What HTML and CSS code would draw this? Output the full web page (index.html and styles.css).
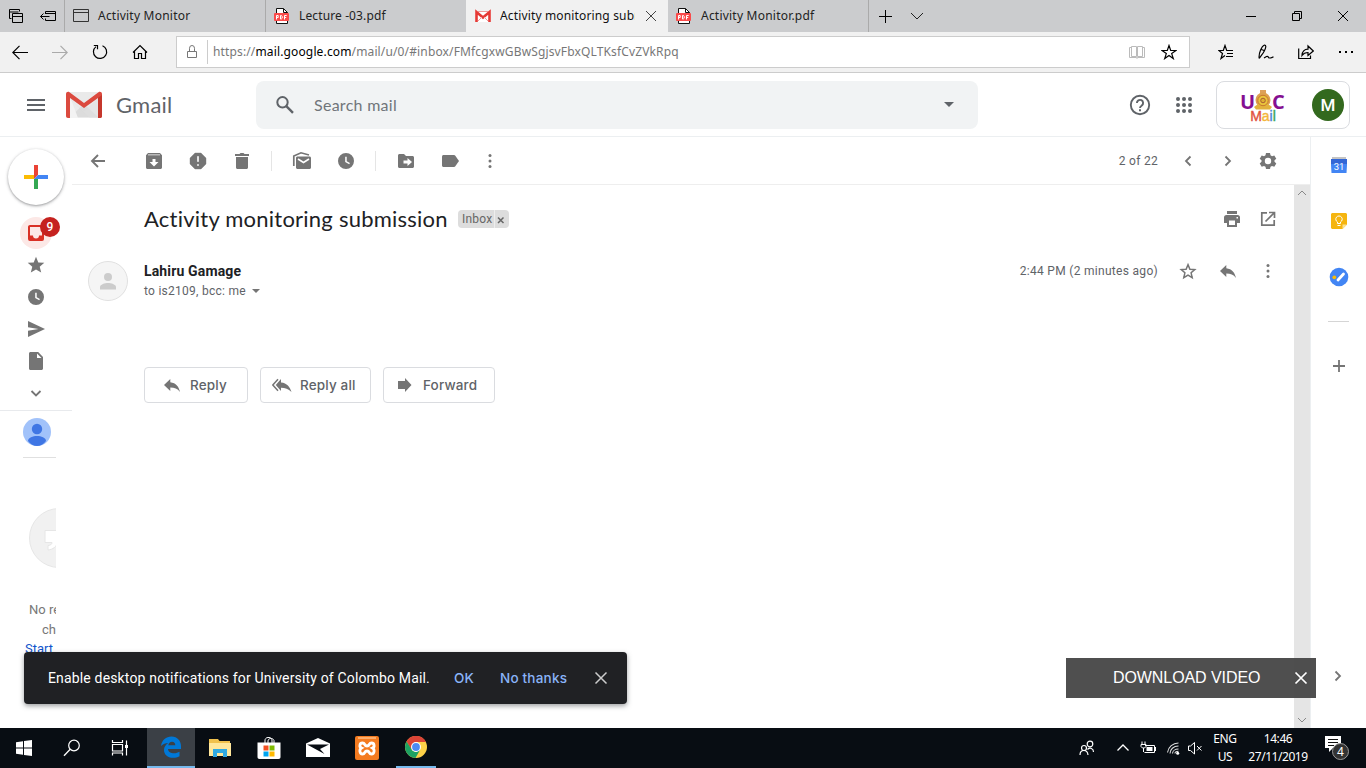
FILE: index.html
```
<!DOCTYPE html>
<html lang="en">
<head>
<meta charset="utf-8">
<title>Activity monitoring submission</title>
<link rel="stylesheet" href="styles.css">
</head>
<body>
<svg class="sprite" aria-hidden="true">
  <defs>
    <symbol id="pdf" viewBox="0 0 16 16"><path d="M2.500 15.500V.5h7l4 4v11z" fill="#fff" stroke="#111"/><path d="M9.500.5v4h4" fill="none" stroke="#111"/><rect x="0" y="5" width="15" height="8" rx="1" fill="#fa4b4b"/><path d="M2.500 11.500v-4h1.700v2H2.500M6.500 7.500v3.500h.8l.9-.8V8.300l-.9-.8zM10.500 11.500v-4h2.200M10.500 9.500h1.700" fill="none" stroke="#fff"/></symbol>
    <symbol id="close" viewBox="0 0 16 16"><path d="M3 3l10 10M13 3L3 13" fill="none" stroke="currentColor"/></symbol>
    <symbol id="clock" viewBox="0 0 20 20"><path fill-rule="evenodd" d="M10 2a8 8 0 1 0 0 16 8 8 0 0 0 0-16zM9.200 5.800h1.500v4.400l3.200 1.900-.7 1.200-4-2.400z"/></symbol>
    <symbol id="dots" viewBox="0 0 20 20"><circle cx="10" cy="4.500" r="1.500"/><circle cx="10" cy="10" r="1.500"/><circle cx="10" cy="15.500" r="1.500"/></symbol>
    <symbol id="reply" viewBox="0 0 20 20"><path d="M8.300 7.300V4L2 10.100l6.300 6v-3.500c4.300 0 7.200 1.200 9.700 4.400-1-5-4-9-9.700-9.700z"/></symbol>
    <symbol id="chev" viewBox="0 0 20 20"><path d="M7.500 5.500L12 10l-4.500 4.500" fill="none" stroke="currentColor" stroke-width="1.800"/></symbol>
  </defs>
</svg>

<div class="tabs">
  <div class="tabtools">
    <svg width="16" height="16" viewBox="0 0 16 16"><g fill="none" stroke="#000"><path d="M3.500 10.500h-2v-9h10v2M1.500 4h9"/><path d="M4.500 5.500h10v9h-10zM4.500 8.500h10"/></g></svg>
    <svg width="18" height="16" viewBox="0 0 18 16"><path d="M6.500 6V3.500h10v9h-10V10.500M6.500 5.500h10M1.500 8.500h9M4.500 5.500l-3 3 3 3" fill="none" stroke="#000"/></svg>
  </div>
  <div class="tab"><svg width="16" height="16" viewBox="0 0 16 16"><path d="M.5 1.500h15v12H.5zM.5 4.500h15" fill="none" stroke="#333"/></svg><span>Activity Monitor</span></div>
  <div class="tab second"><svg width="16" height="16"><use href="#pdf"/></svg><span>Lecture -03.pdf</span></div>
  <div class="tab active"><svg width="16" height="16" viewBox="0 0 16 16"><path d="M0 3h16v11H0z" fill="#fff"/><path d="M1.500 14V4L8 9.500 14.500 4v10" fill="none" stroke="#e53935" stroke-width="2.600"/><path d="M3 13l4-4M13 13L9 9M3 3.500h10" stroke="#ef9a9a" stroke-width="1" fill="none"/></svg><span>Activity monitoring submission</span><svg class="x" width="16" height="16"><use href="#close"/></svg></div>
  <div class="tab last"><svg width="16" height="16"><use href="#pdf"/></svg><span>Activity Monitor.pdf</span></div>
  <div class="newtab">
    <svg width="14" height="14" viewBox="0 0 14 14"><path d="M7.500 1v13M1 7.500h13" stroke="#000" fill="none"/></svg>
    <svg width="14" height="14" viewBox="0 0 14 14"><path d="M1 4l6 6 6-6" stroke="#222" fill="none"/></svg>
  </div>
  <div class="win">
    <svg width="12" height="12" viewBox="0 0 12 12"><path d="M1 6.500h10" stroke="#000"/></svg>
    <svg width="12" height="12" viewBox="0 0 12 12"><path d="M1.500 3.500h7v7h-7zM3.500 3.500v-2h7v7h-2" stroke="#000" fill="none"/></svg>
    <svg width="12" height="12" viewBox="0 0 12 12"><path d="M1 1l10 10M11 1L1 11" stroke="#000" fill="none"/></svg>
  </div>
</div>

<div class="nav">
  <div class="navbtns">
    <svg width="16" height="16" viewBox="0 0 16 16"><path d="M.8 8.500H16M7.500 1.800L.8 8.500l6.700 6.700" fill="none" stroke="#000" stroke-width="1.200"/></svg>
    <svg width="16" height="16" viewBox="0 0 16 16"><path d="M0 8.500h15.200M8.500 1.800l6.700 6.700-6.700 6.700" fill="none" stroke="#aaa" stroke-width="1.200"/></svg>
    <svg width="16" height="16" viewBox="0 0 16 16"><path d="M10.500 1.700A6.600 6.600 0 1 1 4 2.600M1.800 1.500h3.700v3.800" fill="none" stroke="#000" stroke-width="1.200"/></svg>
    <svg width="16" height="16" viewBox="0 0 16 16"><path d="M1 8.500l7-7 7 7M2.500 7.500v7h4v-5h3v5h4v-7" fill="none" stroke="#000" stroke-width="1.200"/></svg>
  </div>
  <div class="url">
    <svg width="12" height="16" viewBox="0 0 12 16"><path d="M1.500 7.500h9v6h-9zM3.500 7.500V4.300a2.500 2.800 0 0 1 5 0v3.200" fill="none" stroke="#777"/></svg>
    <span class="addr">https://<b>mail.google.com</b>/mail/u/0/#inbox/FMfcgxwGBwSgjsvFbxQLTKsfCvZVkRpq</span>
    <svg class="book" width="16" height="16" viewBox="0 0 16 16"><path d="M2.500 2.500h5v10h-5zM8.500 2.500h5v10h-5zM2.500 3.500h-2v10h7l.5 1 .5-1h7v-10h-2" fill="none" stroke="#bbb"/></svg>
    <svg width="16" height="16" viewBox="0 0 16 16"><path d="M8 1.500l1.700 5H15l-4.300 3.100 1.600 5L8 11.500l-4.300 3.100 1.600-5L1 6.500h5.300z" fill="none" stroke="#000" stroke-width="1.200"/></svg>
  </div>
  <div class="navtools">
    <svg width="16" height="16" viewBox="0 0 16 16"><path d="M7 11.500l-4 3 1.500-5L.8 6.500h4.500L7 1.500l1.700 5H15M9 9.500h6M8 12.500h7" fill="none" stroke="#000" stroke-width="1.200"/></svg>
    <svg width="16" height="16" viewBox="0 0 16 16"><path d="M1.200 14.500c-.8-5 2.500-12.500 5.300-13.500 2 .2 1.500 2.500-.2 6S3 11.500 1.200 14.500M3.500 5.500l2.500 1M6 14l2.500-1.500c1.200-.5 1.800.3 1.800.8s2.200 1.500 5.200-.5" fill="none" stroke="#000" stroke-width="1.200"/></svg>
    <svg width="16" height="16" viewBox="0 0 16 16"><path d="M.7 4.500v10h11.800v-3M4 11.500c0-4 2.500-6.300 6-6.300V2l5.300 5-5.300 4.500V8.500C7 8.500 5.500 9.300 4 11.500z" fill="none" stroke="#000" stroke-width="1.200"/></svg>
    <svg width="16" height="16" viewBox="0 0 16 16"><path d="M1 7h2v2H1zM7 7h2v2H7zM13 7h2v2h-2z"/></svg>
  </div>
</div>

<div class="head">
  <svg class="menu" width="20" height="16" viewBox="0 0 20 16"><path d="M1 3h18M1 8h18M1 13h18" stroke="#5f6368" stroke-width="2"/></svg>
  <svg class="logo" width="36" height="28" viewBox="0 0 36 28"><path d="M2 1h32v26H2z" fill="#eaeaea"/><path d="M4 26l14-13 14 13z" fill="#dcdcdc"/><path d="M4 6v21h8z" fill="#f3f3f3"/><path d="M4 8l14 12L34 6v21H24z" fill="#e0e0e0" opacity=".5"/><path d="M0 3v22c0 1.200.8 2 2 2h2V7l14 10L32 7v20h2c1.200 0 2-.8 2-2V3c0-2-2.200-2.800-3.500-1.700L18 12 3.500 1.300C2.200.2 0 1 0 3z" fill="#db4a3f"/><path d="M32 7l4-3v21c0 1.200-.8 2-2 2h-2z" fill="#c5372c"/></svg>
  <span class="gmail">Gmail</span>
  <div class="search">
    <svg width="20" height="20" viewBox="0 0 20 20"><circle cx="7.500" cy="7.300" r="5.200" fill="none" stroke="#5f6368" stroke-width="2"/><path d="M11.300 11.200l6.700 6.600" stroke="#5f6368" stroke-width="2.400"/></svg>
    <span class="ph">Search mail</span>
    <svg width="10" height="5" viewBox="0 0 10 5"><path d="M0 0h10L5 5z" fill="#5f6368"/></svg>
  </div>
  <svg class="help" width="22" height="22" viewBox="0 0 22 22"><circle cx="11" cy="11" r="9.200" fill="none" stroke="#5f6368" stroke-width="1.900"/><path d="M7.900 9a3.100 3.100 0 1 1 4.900 2.500c-1.100.8-1.800 1.200-1.800 2.500" fill="none" stroke="#5f6368" stroke-width="1.900"/><path d="M10 15.300h2v2h-2z" fill="#5f6368"/></svg>
  <svg class="apps" width="18" height="18" viewBox="0 0 18 18"><path d="M3 3h.01M9 3h.01M15 3h.01M3 9h.01M9 9h.01M15 9h.01M3 15h.01M9 15h.01M15 15h.01" stroke="#5f6368" stroke-width="4" stroke-linecap="round"/></svg>
  <div class="account">
    <div class="uoc">
      <div class="uocrow"><b>U</b><svg width="18" height="22" viewBox="0 0 18 22"><path d="M6 1h6v4H6z" fill="#dda05a"/><circle cx="9" cy="11" r="7.500" fill="#dda050"/><path d="M0 18l4-3h10l4 3-2 2.500H2z" fill="#e2b23d"/><circle cx="9" cy="11.500" r="5.200" fill="#eac43c" stroke="#c8792e"/><circle cx="9" cy="11.500" r="2.300" fill="#dfb132" stroke="#a95c35"/></svg><b>C</b></div>
      <div class="uocmail"><i class="r">M</i><i class="o">a</i><i class="bl">i</i><i class="g">l</i></div>
    </div>
    <span class="ava">M</span>
  </div>
</div>

<div class="body">
  <div class="rail">
    <div class="compose"><svg width="24" height="24" viewBox="0 0 24 24"><path d="M10 0h4v10l-4 4z" fill="#ea4335"/><path d="M0 10h10v4H0z" fill="#fbbc04"/><path d="M10 14h4v10h-4z" fill="#34a853"/><path d="M14 10h10v4H10z" fill="#4285f4"/></svg></div>
    <div class="item inbox"><svg width="20" height="20" viewBox="0 0 20 20"><path d="M4 2h12a2 2 0 0 1 2 2v12a2 2 0 0 1-2 2H4a2 2 0 0 1-2-2V4c0-1.100.9-2 2-2zm0 2v8.500h3a3 3 0 0 0 6 0h3V4z" fill="#d93025" fill-rule="evenodd"/></svg><span class="badge">9</span></div>
    <div class="item"><svg width="20" height="20" viewBox="0 0 20 20"><path d="M10 1.800l2.300 5.600 6 .4-4.600 3.900 1.500 5.900L10 14.400l-5.200 3.200 1.500-5.900-4.600-3.900 6-.4z"/></svg></div>
    <div class="item"><svg width="20" height="20"><use href="#clock"/></svg></div>
    <div class="item"><svg width="20" height="20" viewBox="0 0 20 20"><path d="M2 2l17 8-17 8v-6.200l10.500-1.800L2 8.200z"/></svg></div>
    <div class="item"><svg width="20" height="20" viewBox="0 0 20 20"><path fill-rule="evenodd" d="M4.500 1h7.700L17 6v11.500c0 .8-.7 1.500-1.500 1.500h-11c-.8 0-1.500-.7-1.500-1.500v-15C3 1.700 3.700 1 4.500 1zM11 2.500V7h4.500z"/></svg></div>
    <div class="item"><svg width="20" height="20" viewBox="0 0 20 20"><path d="M5.500 8l4.500 4.500L14.500 8" fill="none" stroke="currentColor" stroke-width="1.800"/></svg></div>
    <div class="chat">
      <svg width="28" height="28" viewBox="0 0 28 28"><circle cx="14" cy="14" r="14" fill="#a1c2fa"/><circle cx="14" cy="11" r="5.200" fill="#3f76e4"/><path d="M5 23c0-3.500 5-5 9-5s9 1.500 9 5c-2.500 3.300-5.500 5-9 5s-6.500-1.700-9-5z" fill="#3f76e4"/></svg>
      <div class="hang">
        <svg width="60" height="60" viewBox="0 0 60 60"><circle cx="30" cy="30" r="29.500" fill="#f1f1f1" stroke="#e6e6e6"/><path d="M16 22.500h12v12c0 4-4 7-9 7.500v-4.500c2 0 4-1 4-3h-7z" fill="#fff" stroke="#e6e6e6"/></svg>
        <div class="l1">No recent</div><div class="l2">chats</div><div class="l3">Start</div>
      </div>
    </div>
  </div>

  <div class="main">
    <div class="bar">
      <svg class="b1" width="20" height="20" viewBox="0 0 20 20"><path d="M17 10H4.500M10 4l-6 6 6 6" fill="none" stroke="#757575" stroke-width="1.900"/></svg>
      <svg class="b2" width="20" height="20" viewBox="0 0 20 20"><path fill-rule="evenodd" d="M4 2h12l2 2.300v12.200c0 .8-.7 1.500-1.500 1.500h-13c-.8 0-1.500-.7-1.500-1.500V4.300zM4 3.500h12v.8H4zM8.500 8v3H5.500l4.500 4.500 4.500-4.500h-3V8z"/></svg>
      <svg class="b3" width="20" height="20" viewBox="0 0 20 20"><path fill-rule="evenodd" d="M7 2h6l5 5v6l-5 5H7l-5-5V7zM9 5v6h2V5zM9 13v2h2v-2z" stroke="#757575" stroke-width=".4" stroke-linejoin="round"/></svg>
      <svg class="b4" width="20" height="20" viewBox="0 0 20 20"><path d="M4 6h12v10.500c0 .8-.7 1.500-1.500 1.500h-9c-.8 0-1.500-.7-1.500-1.500zM3 3h4.500l1-1h3l1 1H17v2H3z"/></svg>
      <i class="sep s1"></i>
      <svg class="b5" width="20" height="20" viewBox="0 0 20 20"><path d="M1.800 15V5L9 1.800 17 4" fill="none" stroke="#757575" stroke-width="1.700"/><path d="M5 5.500h12.500c.8 0 1.500.7 1.500 1.500v9.500c0 .8-.7 1.500-1.500 1.500H5.500c-.8 0-1.500-.7-1.500-1.500V6.500z"/><path d="M6 8l5.500 3.500L17 8" fill="none" stroke="#fff" stroke-width="1.600"/></svg>
      <svg class="b6" width="20" height="20"><use href="#clock"/></svg>
      <i class="sep s2"></i>
      <svg class="b7" width="20" height="20" viewBox="0 0 20 20"><path fill-rule="evenodd" d="M3.500 3H8l2 2h6.500c.8 0 1.500.7 1.500 1.500v9c0 .8-.7 1.500-1.500 1.500h-13c-.8 0-1.500-.7-1.500-1.500v-11C2 3.700 2.700 3 3.500 3zM7.500 9.500v3H11.500v2.500l4.500-4-4.500-4v2.500z"/></svg>
      <svg class="b8" width="20" height="20" viewBox="0 0 20 20"><path d="M3.500 4H14c.5 0 1 .3 1.300.7L19 10l-3.700 5.300c-.3.4-.8.7-1.300.7H3.500c-.8 0-1.500-.7-1.500-1.500v-9C2 4.700 2.700 4 3.500 4z"/></svg>
      <svg class="b9" width="20" height="20"><use href="#dots"/></svg>
      <span class="count">2 of 22</span>
      <svg class="c1 flip" width="20" height="20"><use href="#chev"/></svg>
      <svg class="c2" width="20" height="20"><use href="#chev"/></svg>
      <svg class="c3" width="20" height="20" viewBox="0 0 20 20"><path fill-rule="evenodd" d="M8 2h4l.5 2.300 1.500.9 2.300-.8 2 3.300-1.800 1.600v1.500l1.800 1.600-2 3.300-2.300-.8-1.500.9L12 18H8l-.5-2.200-1.500-.9-2.300.8-2-3.300 1.800-1.600V9.300L1.700 7.700l2-3.300 2.300.8 1.500-.9zM10 6.800a3.200 3.200 0 1 0 0 6.400 3.200 3.200 0 0 0 0-6.400z"/></svg>
    </div>
    <div class="view">
      <div class="mail">
        <div class="subj">
          <h2>Activity monitoring submission</h2>
          <span class="tag"><span>Inbox</span><svg width="15" height="18" viewBox="0 0 15 18"><path d="M.5 0v18" stroke="#eee"/><path d="M4 7.500l5.500 5.500M9.500 7.500L4 13" stroke="#666" stroke-width="1.500"/></svg></span>
          <svg class="print" width="20" height="20" viewBox="0 0 20 20"><path fill-rule="evenodd" d="M5 2h10v3H5zM4.500 6h11A2.500 2.500 0 0 1 18 8.500V14h-3v4H5v-4H2V8.500A2.500 2.500 0 0 1 4.500 6zM7 11.500V16h6v-4.500zM14.500 8v1.500H16V8z"/></svg>
          <svg width="20" height="20" viewBox="0 0 20 20"><path d="M9 3.800H3.800v12.400h12.400V11M11 3.500h5.500V9M16.500 3.500l-9 9" fill="none" stroke="#757575" stroke-width="1.700"/></svg>
        </div>
        <div class="sender">
          <svg width="40" height="40" viewBox="0 0 40 40"><circle cx="20" cy="20" r="19.500" fill="#f5f5f5" stroke="#e0e0e0"/><circle cx="20" cy="16" r="4" fill="#ccc"/><path d="M12 28.500V26c0-2.500 5-4 8-4s8 1.500 8 4v2.500z" fill="#ccc"/></svg>
          <div class="who"><b>Lahiru Gamage</b><div><span>to is2109, bcc: me</span><svg width="8" height="4" viewBox="0 0 8 4"><path d="M0 0h8L4 4z"/></svg></div></div>
          <span class="time">2:44 PM (2 minutes ago)</span>
          <svg width="20" height="20" viewBox="0 0 20 20"><path d="M10 3.600l1.900 4.600 4.900.4-3.700 3.200 1.100 4.900-4.200-2.600-4.200 2.600 1.100-4.900-3.700-3.200 4.900-.4z" fill="none" stroke="#757575" stroke-width="1.500"/></svg>
          <svg width="20" height="20"><use href="#reply"/></svg>
          <svg width="20" height="20"><use href="#dots"/></svg>
        </div>
        <div class="acts">
          <div class="act a1"><svg width="20" height="20"><use href="#reply"/></svg><span>Reply</span></div>
          <div class="act a2"><svg width="20" height="20" viewBox="0 0 20 20"><path d="M9 7.500V4L3.800 10 9 16v-3.300c4.300 0 7.200 1 10.500 4.300-1.500-5-4.500-9-10.500-9.500z"/><path d="M6 4.300L.8 10 6 15.700" fill="none" stroke="#757575" stroke-width="1.500"/></svg><span>Reply all</span></div>
          <div class="act a3"><svg width="20" height="20" viewBox="0 0 20 20"><path d="M3 6h7V3l6.500 7-6.500 7v-3H3z"/></svg><span>Forward</span></div>
        </div>
      </div>
      <div class="scroll"><svg width="10" height="6" viewBox="0 0 10 6"><path d="M1 5l4-4 4 4" fill="none" stroke="#888"/></svg><svg width="10" height="6" viewBox="0 0 10 6"><path d="M1 1l4 4 4-4" fill="none" stroke="#888"/></svg></div>
    </div>
  </div>

  <div class="side">
    <svg class="cal" width="20" height="20" viewBox="0 0 20 20"><path d="M3 2h14v3H3z" fill="#c4c4c4"/><path d="M2 4h16v6l-.5 8h-15L2 10z" fill="#4285f4"/><path d="M2 4h16v5H2z" fill="#3367d6"/><text x="10" y="14.800" text-anchor="middle" class="caltext">31</text></svg>
    <svg class="keep" width="20" height="20" viewBox="0 0 20 20"><path d="M3 2h14l1 1v10.500L13.500 18H3l-1-1V3z" fill="#f5b50f"/><path d="M13.500 18v-4.500H18z" fill="#fde293"/><path d="M8.500 12.500V11a3.200 3.200 0 1 1 3 0v1.500zM8.500 14.500h3" fill="none" stroke="#fff"/></svg>
    <svg class="task" width="20" height="20" viewBox="0 0 20 20"><circle cx="10" cy="10" r="9.300" fill="#4285f4"/><path d="M9 13l5.500-6" stroke="#fff" stroke-width="2.800" stroke-linecap="round"/><circle cx="5.300" cy="10.300" r="1.900" fill="#fbbc04"/></svg>
    <i></i>
    <svg class="plus" width="20" height="20" viewBox="0 0 20 20"><path d="M10 4v12M4 10h12" stroke="#757575" stroke-width="1.800"/></svg>
    <svg class="exp" width="20" height="20"><use href="#chev"/></svg>
  </div>
</div>

<div class="taskbar">
  <div class="tk"><svg width="16" height="16" viewBox="0 0 16 16"><path d="M0 2.200L7 1.200v6.300H0zM8 1.100L16 0v7.500H8zM0 8.500h7v6.300L0 13.800zM8 8.500h8V16l-8-1.100z" fill="#fff"/></svg></div>
  <div class="tk"><svg width="18" height="18" viewBox="0 0 18 18"><circle cx="11" cy="6.500" r="5.300" fill="none" stroke="#fff" stroke-width="1.200"/><path d="M7.200 10.300L1 16.800" stroke="#fff" stroke-width="1.300"/></svg></div>
  <div class="tk"><svg width="18" height="18" viewBox="0 0 18 18"><path d="M1.500 1v2.500h10V1M1.500 16.500v-2.500h10v2.500M1.500 5.500h10v6.500h-10zM15.500 1.500v15" fill="none" stroke="#fff" stroke-width="1.200"/><path d="M14 6h3v3h-3z" fill="#fff"/></svg></div>
  <div class="tk edge"><svg width="22" height="22" viewBox="0 0 22 22"><path d="M1 10C2 4 6 .5 11.500.5 17.500.5 21 5 21 10v3H8c.2 3 3 4.300 6 4.300 2.200 0 4-.6 5.500-1.500v4.500c-2 1-4 1.500-6.500 1.500C7.500 21.800 4 18.500 4 14c0-3 1.800-5.500 4.300-7C5.500 7 3 8 1 10zm7.300-.8h7c0-2-1.200-3.400-3.300-3.400S8.800 7.300 8.300 9.200z" fill="#0078d7" fill-rule="evenodd"/></svg></div>
  <div class="tk"><svg width="22" height="20" viewBox="0 0 22 20"><path d="M0 1h9l1.500 2H21v15H0z" fill="#f0c14d"/><path d="M0 5h22v13H0z" fill="#ffe79b"/><path d="M4 19v-8h14v8h-4v-4H8v4z" fill="#2fa9e2"/></svg></div>
  <div class="tk"><svg width="24" height="24" viewBox="0 0 24 24"><path d="M8 7V5a3 3 0 0 1 3-3.500h1a3 3 0 0 1 3 3.500v2M11 7V5c0-3 5-3.500 6-.5V7" fill="none" stroke="#fff"/><path d="M.5 6.500h23V21c0 1.200-.7 2-2 2h-19c-1.300 0-2-.8-2-2z" fill="#fff"/><path d="M6.500 9.500h5v5h-5z" fill="#f25022"/><path d="M12.500 9.500h5v5h-5z" fill="#7fba00"/><path d="M6.500 15.500h5v5h-5z" fill="#00a4ef"/><path d="M12.500 15.500h5v5h-5z" fill="#ffb900"/></svg></div>
  <div class="tk"><svg width="24" height="20" viewBox="0 0 24 20"><path d="M0 5.500L12 0l12 5.500V19H0z" fill="#fff"/><path d="M1 6.500h22L14 11l4.500 5z" fill="#080d13"/></svg></div>
  <div class="tk"><svg width="24" height="24" viewBox="0 0 24 24"><rect width="24" height="24" rx="2" fill="#f47b20"/><path d="M3 2h18" stroke="#ffbe85" stroke-width="1.500"/><path d="M7.500 7c3 0 1.500 3 4.500 3s1.500-3 4.500-3 3.500 4 1 5c2.500 1.500 2 6-1 6s-1.500-3-4.500-3-1.500 3-4.500 3-3.500-4.500-1-6c-2.500-1-2-5 1-5z" fill="none" stroke="#fff" stroke-width="2.800"/></svg></div>
  <div class="tk chrome"><svg width="22" height="22" viewBox="0 0 22 22"><circle cx="11" cy="11" r="11" fill="#fdd148"/><path d="M11 6h10a11 11 0 0 0-19.500-.5L6.500 14z" fill="#db4437"/><path d="M1.500 5.500L6.700 13.500c1 1.500 3 2.500 4.300 2.500l4-2-4.500 8A11 11 0 0 1 1.500 5.500z" fill="#1da262"/><circle cx="11" cy="11" r="5" fill="#fff"/><circle cx="11" cy="11" r="3.900" fill="#4c8bf5"/></svg></div>
  <div class="tray">
    <svg width="16" height="16" viewBox="0 0 16 16"><g fill="none" stroke="#fff" stroke-width="1.200"><circle cx="11" cy="4" r="2.800"/><circle cx="5" cy="8" r="2.500"/><path d="M1 15c0-6 7.500-6 8 0M8.500 9.500c2.500-2.500 6-1 6 2.500"/></g></svg>
    <svg class="up" width="14" height="10" viewBox="0 0 14 10"><path d="M1.500 7.500L7 2l5.500 5.500" fill="none" stroke="#fff" stroke-width="1.300"/></svg>
    <svg class="bat" width="18" height="16" viewBox="0 0 18 16"><path d="M6 5.500h9.500v7h-10M4.500 12v-4M3 1.500v3M6 1.500v3M2 4.500h5v2L5.500 8h-2L2 6.500zM16.500 7v4" fill="none" stroke="#fff"/><path d="M7.500 7h6v4h-6z" fill="#fff"/></svg>
    <svg class="wifi" width="14" height="16" viewBox="0 0 14 16"><path d="M1.500 12.500A11 11 0 0 1 12.500 3M4 13.500C4 9.500 7.500 6 12.500 6M6.500 13.500C6.500 11 9 9 12.500 9M9 13.500c0-1.200 1.500-2.200 3.500-2.200" fill="none" stroke="#ddd" stroke-width="1.100"/><circle cx="11.700" cy="13.200" r="1.500" fill="#fff"/></svg>
    <svg class="vol" width="16" height="16" viewBox="0 0 16 16"><path d="M1.500 6v4.500h2l4 3.500V2.500l-4 3.500zM10 6l4.500 4.500M14.500 6L10 10.500" fill="none" stroke="#fff"/></svg>
    <span class="lang">ENG<br>US</span>
    <span class="date">14:46<br>27/11/2019</span>
    <svg class="note" width="26" height="26" viewBox="0 0 26 26"><path d="M1 1h16v12H9l-4 4v-4H1z" fill="#fff"/><path d="M4 4.500h10M4 7.500h10M4 10.500h6" stroke="#111"/><circle cx="16.500" cy="16.500" r="8" fill="#333" stroke="#999"/><text x="16.500" y="20.500" text-anchor="middle" class="four">4</text></svg>
  </div>
</div>

<div class="toast"><span class="msg">Enable desktop notifications for University of Colombo Mail.</span><b class="ok">OK</b><b class="no">No thanks</b><svg width="16" height="16" viewBox="0 0 16 16"><path d="M2.500 2.500l11 11M13.500 2.500l-11 11" stroke="#ccc" stroke-width="1.500"/></svg></div>
<div class="dl"><span>DOWNLOAD VIDEO</span><svg width="16" height="16" viewBox="0 0 16 16"><path d="M2.500 2.500l11 11M13.500 2.500l-11 11" stroke="#fff" stroke-width="1.700"/></svg></div>
</body>
</html>
```
FILE: styles.css
```
* { box-sizing: border-box; }
body { margin: 0; width: 1366px; height: 768px; overflow: hidden; background: #fff; font-family: Roboto, "Liberation Sans", sans-serif; color: #202124; white-space: nowrap; display: flex; flex-direction: column; position: relative; }
svg { display: block; flex: none; fill: #757575; color: #757575; }
.sprite { position: absolute; width: 0; height: 0; }

/* browser chrome */
.tabs { height: 32px; display: flex; background: #cbccce; font: 12px/32px "Noto Sans", "Open Sans", sans-serif; letter-spacing: .22px; color: #222; }
.tabtools { width: 65px; display: flex; align-items: center; padding-left: 8px; gap: 15px; border-right: 1px solid #aaa; }
.tab { width: 201px; display: flex; align-items: center; padding-left: 8px; gap: 9px; border-right: 1px solid #aaa; }
.tab.second { width: 200px; border-right: 0; letter-spacing: .12px; }
.tab.active { width: 202px; background: #f1f1f1; color: #111; padding-left: 9px; border: 0; letter-spacing: .15px; }
.active span { width: 135px; overflow: hidden; }
.active .x { color: #444; margin-left: -1px; }
.newtab { display: flex; align-items: center; gap: 18px; padding-left: 9px; }
.win { margin-left: auto; display: flex; align-items: center; gap: 34px; padding-right: 17px; }
.nav { height: 41px; display: flex; align-items: center; background: #f1f1f1; border-bottom: 1px solid #ccc; }
.navbtns { width: 176px; display: flex; gap: 24px; padding-left: 12px; }
.url { width: 1014px; height: 32px; display: flex; align-items: center; background: #fff; border: 1px solid #ccc; padding: 0 12px 0 9px; }
.addr { flex: 1; border-left: 1px solid #ccc; margin-left: 9px; padding-left: 5px; font: 12px/24px "Noto Sans", "Open Sans", sans-serif; letter-spacing: .14px; color: #777; }
.addr b { font-weight: 400; color: #000; }
.book { margin-right: 16px; }
.navtools { display: flex; gap: 24px; padding-left: 28px; }
.navtools svg { fill: #000; }

/* mail header */
.head { height: 64px; display: flex; align-items: center; border-bottom: 1px solid #eceff1; }
.menu { margin-left: 26px; }
.logo { margin-left: 20px; }
.gmail { width: 140px; margin-left: 14px; font: 22px/64px Lato, sans-serif; letter-spacing: .2px; color: #5f6368; }
.search { width: 722px; height: 48px; border-radius: 8px; background: #f1f3f4; display: flex; align-items: center; padding: 0 24px 0 19px; }
.ph { flex: 1; margin-left: 19px; font: 16px/48px Lato, sans-serif; letter-spacing: .28px; color: #70757a; }
.help { margin-left: 151px; }
.apps { margin-left: 24px; }
.account { margin-left: 23px; width: 134px; height: 48px; border: 1px solid #dadce0; border-radius: 8px; display: flex; align-items: center; padding: 0 5px 0 23px; justify-content: space-between; }
.uoc { width: 48px; height: 34px; }
.uocrow { display: flex; height: 23px; align-items: center; font: 20px/14px "Open Sans", sans-serif; color: #850f91; }
.uocrow svg { margin: 2px -1px 0 -1px; }
.uocrow b { width: 15px; height: 14px; margin-top: 6px; }
.uocrow b:last-child { margin-left: 1px; }
.uocmail { display: flex; justify-content: center; font: 400 14px/11px "Liberation Sans", sans-serif; padding-right: 2px; -webkit-text-stroke: .4px; }
.uocmail i { font-style: normal; }
.r { color: #e1523d; } .o { color: #f4b73b; } .bl { color: #4a86d8; } .g { color: #3ba55c; }
.ava { width: 32px; height: 32px; border-radius: 50%; background: #33691e; color: #fff; text-align: center; font: 500 17px/33px Roboto, sans-serif; }

/* left rail */
.body { height: 591px; display: flex; }
.rail { width: 72px; padding-top: 12px; display: flex; flex-direction: column; align-items: center; }
.compose { width: 56px; height: 56px; border-radius: 50%; background: #fff; box-shadow: 0 1px 2px rgba(60,64,67,.35), 0 1px 3px 1px rgba(60,64,67,.16); display: flex; align-items: center; justify-content: center; margin-bottom: 12px; }
.item { position: relative; width: 32px; height: 32px; display: flex; align-items: center; justify-content: center; }
.inbox { background: #fce8e6; border-radius: 50%; }
.badge { position: absolute; left: 20px; top: 0; width: 20px; height: 20px; border-radius: 50%; background: #c5221f; color: #fff; font: 500 12px/20px Roboto, sans-serif; text-align: center; }
.chat { width: 72px; margin-top: 1px; border-top: 1px solid #e8eaed; padding: 7px 16px 0 23px; }
.hang { width: 33px; height: 196px; margin-top: 11px; border-top: 1px solid #e0e0e0; overflow: hidden; padding-top: 50px; font-size: 13px; line-height: 20px; color: #777; }
.hang svg { margin-left: 6px; }
.l1 { margin: 32px 0 0 6px; } .l2 { margin-left: 19px; } .l3 { margin-left: 2px; color: #15c; line-height: 18px; width: 28px; }

/* message pane */
.main { width: 1238px; }
.bar { height: 48px; display: flex; align-items: center; border-bottom: 1px solid #eee; padding-left: 16px; }
.b2 { margin-left: 36px; } .b3, .b4, .b6, .b8 { margin-left: 24px; }
.sep { width: 1px; height: 20px; background: #e5e5e5; }
.s1 { margin-left: 19px; } .b5 { margin-left: 20px; } .s2 { margin-left: 19px; } .b7 { margin-left: 20px; } .b9 { margin-left: 20px; }
.count, .time { font-size: 12px; letter-spacing: .3px; color: #5f6368; }
.count { margin-left: auto; } .c1 { margin-left: 20px; } .c2 { margin-left: 20px; } .c3 { margin: 0 32px 0 20px; }
.flip { transform: scaleX(-1); }
.view { height: 543px; display: flex; }
.mail { width: 1222px; }
.subj { height: 68px; display: flex; align-items: center; padding: 0 16px 0 72px; }
h2 { margin: 0; width: 314px; font: 400 22px/28px Lato, sans-serif; letter-spacing: .23px; }
.tag { height: 18px; border-radius: 4px; background: #ddd; color: #666; display: flex; font-size: 12px; line-height: 18px; letter-spacing: .2px; padding-left: 4px; width: 51px; justify-content: space-between; }
.print { margin: 0 16px 0 auto; }
.sender { display: flex; padding: 8px 16px 0; align-items: flex-start; gap: 20px; }
.sender > svg:first-child { margin-right: -4px; }
.who { flex: 1; font-size: 14px; line-height: 20px; letter-spacing: .15px; }
.who div { display: flex; align-items: center; gap: 6px; font-size: 12px; letter-spacing: .26px; color: #5f6368; }
.time { line-height: 20px; }
.acts { display: flex; gap: 12px; padding: 66px 0 0 72px; }
.act { height: 36px; border: 1px solid #dadce0; border-radius: 4px; display: flex; align-items: center; font: 500 13.500px/34px Inter, sans-serif; letter-spacing: .15px; color: #5f6368; }
.a1 { width: 104px; padding-left: 17px; gap: 8px; } .a2 { width: 111px; padding-left: 11px; gap: 8px; } .a3 { width: 112px; padding-left: 11px; gap: 8px; }
.scroll { width: 16px; background: #e5e5e5; display: flex; flex-direction: column; align-items: center; justify-content: space-between; padding: 5px 0; }
.side { width: 56px; border-left: 1px solid #eceff1; display: flex; flex-direction: column; align-items: center; padding: 18px 0 42px; }
.keep, .task { margin-top: 36px; }
.side i { width: 21px; height: 1px; background: #d5d5d5; margin-top: 34px; }
.plus { margin-top: 34px; } .exp { margin: auto 1px 0 0; }
.caltext { font: 9.500px Roboto, sans-serif; fill: #fff; }

/* taskbar */
.taskbar { height: 40px; display: flex; background: #080d13; color: #fff; }
.tk { width: 48px; display: flex; align-items: center; justify-content: center; margin-right: 1px; }
.tk:nth-child(2), .tk:nth-child(1) { margin-right: 0; }
.tk:nth-child(3) { margin-right: 3px; }
.edge { background: #3b4046; border-bottom: 2px solid #76b9ed; }
.chrome { width: 40px; margin-left: 4px; border-bottom: 2px solid #76b9ed; }
.tray { margin-left: auto; display: flex; align-items: center; font: 12px/18px "Noto Sans", "Open Sans", sans-serif; text-align: center; padding-right: 16px; }
.up { margin-left: 20px; } .bat { margin-left: 9px; } .wifi { margin-left: 9px; } .vol { margin-left: 7px; }
.lang { width: 24px; margin-left: 10px; letter-spacing: -.4px; } .date { width: 60px; margin-left: 11px; letter-spacing: -.45px; } .note { margin-left: 16px; }
.tray > svg:first-child { margin-right: 1px; }
.four { font: 12px "Noto Sans", sans-serif; fill: #fff; }

/* overlays */
.toast { position: absolute; left: 24px; top: 652px; width: 603px; height: 52px; background: #202124; border-radius: 4px; box-shadow: 0 2px 5px rgba(60,64,67,.5); display: flex; align-items: center; padding-left: 24px; color: #fff; font-size: 14px; }
.toast b { font: 500 13.500px/52px Inter, sans-serif; letter-spacing: .2px; color: #8ab4f8; }
.msg { width: 406px; letter-spacing: .16px; } .ok { width: 46px; } .no { width: 93px; }
.dl { position: absolute; left: 1066px; top: 658px; width: 250px; height: 40px; background: rgba(68,68,68,.94); display: flex; align-items: center; color: #fff; font: 16px/42px "Liberation Sans", sans-serif; letter-spacing: -.08px; padding-left: 47px; }
.dl span { width: 180px; }
```
